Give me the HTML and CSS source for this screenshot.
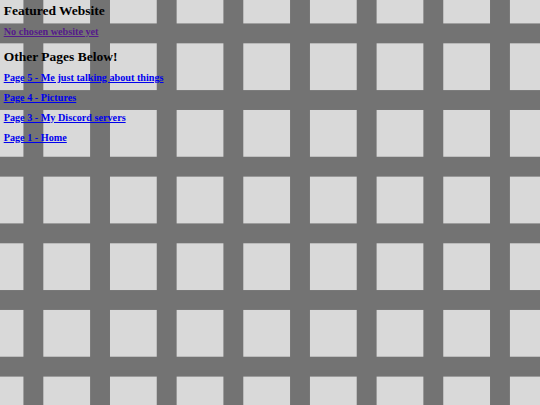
FILE: index.html
```html
<!DOCTYPE html>
<html>
<head>
<meta charset="utf-8">
<title>Home</title>
<link rel="stylesheet" href="styles.css">
</head>
<body>
<main class="page">
  <h2 class="heading">Featured Website</h2>
  <p class="item featured"><a class="link visited" href="#">No chosen website yet</a></p>
  <h2 class="heading other">Other Pages Below!</h2>
  <p class="item first"><a class="link" href="#">Page 5 - Me just talking about things</a></p>
  <p class="item"><a class="link" href="#">Page 4 - Pictures</a></p>
  <p class="item"><a class="link" href="#">Page 3 - My Discord servers</a></p>
  <p class="item"><a class="link" href="#">Page 1 - Home</a></p>
</main>
</body>
</html>
```

FILE: styles.css
```css
html, body {
  margin: 0;
  padding: 0;
  height: 100%;
}

body {
  font-family: "Liberation Serif", "Times New Roman", serif;
  background-color: #d9d9d9;
  background-image:
    linear-gradient(to bottom, transparent 46.667px, #737373 46.667px),
    linear-gradient(to right, transparent 46.667px, #737373 46.667px);
  background-size: 66.667px 66.667px;
  background-position: 43.333px 43.333px;
}

.page {
  display: flex;
  flex-direction: column;
  align-items: flex-start;
  padding: 3px 0 0 3.7px;
}

.heading {
  margin: 0;
  font-size: 13.5px;
  line-height: 16px;
  font-weight: bold;
  color: #000;
}

.heading.other {
  margin-top: 10.5px;
}

.item {
  margin: 8px 0 0 0;
  font-size: 10.2px;
  line-height: 12px;
  font-weight: bold;
}

.item.featured {
  margin-top: 7px;
}

.item.first {
  margin-top: 7px;
}

.link {
  color: #0000ee;
  text-decoration: underline;
}

.link.visited {
  color: #551a8b;
}
```
